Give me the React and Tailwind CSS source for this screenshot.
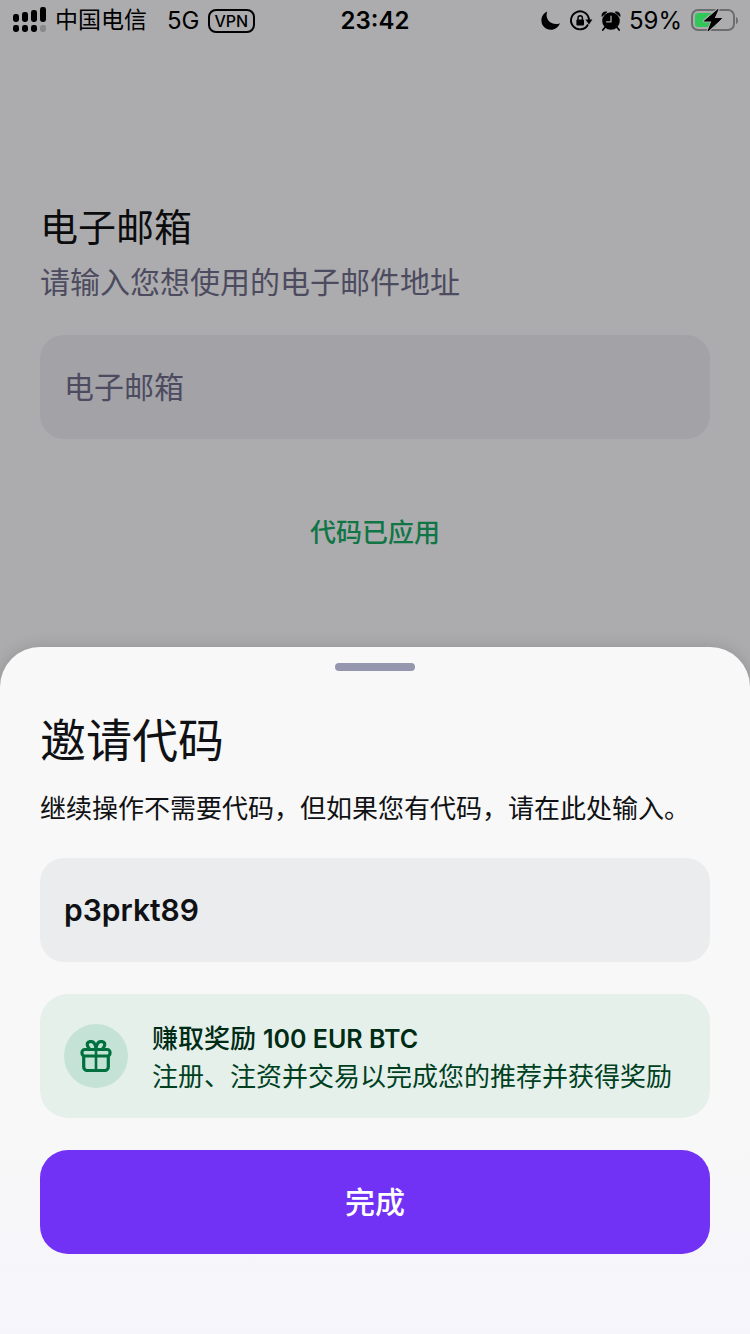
function SignalBars() {
  return (
    <svg className="h-7 w-9 shrink-0" viewBox="0 0 36 28" aria-hidden="true">
      <g fill="#000">
        <rect x="1" y="7" width="6" height="8" rx="2.4" />
        <rect x="10" y="5" width="6" height="10" rx="2.4" />
        <rect x="19" y="3" width="6" height="12" rx="2.4" />
        <rect x="28" y="0" width="6" height="15" rx="2.4" />
        <rect x="1" y="18" width="6" height="7" rx="2.4" />
        <rect x="10" y="18" width="6" height="7" rx="2.4" />
        <rect x="19" y="18" width="6" height="7" rx="2.4" />
      </g>
      <rect x="28" y="18" width="6" height="7" rx="2.4" fill="#88888a" />
    </svg>
  );
}

function MoonIcon() {
  return (
    <svg className="h-5 w-5" viewBox="0 0 20 20" aria-hidden="true">
      <path d="M6.2 .6C5.800 1.700 5.600 2.900 5.600 4.100c0 5.200 4.100 9 9.300 9 1.400 0 2.900-.3 4-.9C17.500 16.100 14 18.800 9.800 18.800 4.600 18.800.4 14.700.4 9.500.4 5.500 2.700 2.100 6.200.6Z" />
    </svg>
  );
}

function RotationLockIcon() {
  return (
    <svg className="h-6 w-6" viewBox="0 0 24 24" aria-hidden="true">
      <path d="M19 15.500A9 9 0 1 1 20 11" fill="none" stroke="#000" strokeWidth="1.900" />
      <path d="M16.400 10.400h7l-3.400 5Z" />
      <rect x="7.400" y="10.600" width="7.600" height="5.800" rx="1" />
      <path d="M9 11V9a2.200 2.200 0 0 1 4.400 0V11" fill="none" stroke="#000" strokeWidth="1.400" />
    </svg>
  );
}

function AlarmIcon() {
  return (
    <svg className="h-5 w-5" viewBox="0 0 20 20" aria-hidden="true">
      <circle cx="10" cy="10" r="8.800" />
      <path d="M.8 6C-.4 2.500 2.800-.6 6.400.9ZM19.200 6C20.400 2.500 17.200-.6 13.600.9Z" />
      <path d="M3.800 16.500 1.800 19M16.200 16.500l2 2.500" stroke="#000" strokeWidth="1.700" strokeLinecap="round" />
      <path d="M10 5.200v5.600H5.600" fill="none" stroke="#acacae" strokeWidth="1.300" strokeLinecap="round" strokeLinejoin="round" />
    </svg>
  );
}

function BatteryIcon() {
  return (
    <svg className="h-6 w-12" viewBox="0 0 48 24" aria-hidden="true">
      <rect x="2" y="1" width="42" height="20" rx="6" fill="none" stroke="#6d6d6f" strokeWidth="2" />
      <path d="M46 8c2.600.8 2.600 6.200 0 7Z" fill="#6d6d6f" />
      <path d="M8 4h18v14H8a3 3 0 0 1-3-3V7a3 3 0 0 1 3-3Z" fill="#31c659" />
      <path d="M28 .5 14.500 12H22l-4 10L31.500 9.500H24Z" fill="#000" stroke="#acacae" strokeWidth="3" strokeLinejoin="round" paintOrder="stroke" />
      <path d="M28 .5 14.500 12H22l-4 10L31.500 9.500H24Z" fill="#000" stroke="#000" strokeWidth="1" strokeLinejoin="round" />
    </svg>
  );
}

function GiftIcon() {
  return (
    <svg className="h-8 w-8" viewBox="0 0 32 32" fill="none" stroke="#00703f" strokeWidth="3.200" strokeLinejoin="round" aria-hidden="true">
      <rect x="2" y="9.500" width="28" height="6.500" rx="2.800" />
      <path d="M3.700 16V27a3.500 3.500 0 0 0 3.500 3.500h17.600a3.500 3.500 0 0 0 3.500-3.500V16" />
      <path d="M16 9.500V30.500" strokeWidth="2.600" />
      <path d="M16 9C15.500 4 13.500 1.500 10.800 1.500 8.800 1.500 7.200 2.700 7.200 4.600c0 1.900 1.300 3.200 2.600 4.600M16 9c.5-5 2.500-7.500 5.200-7.500 2 0 3.600 1.200 3.600 3.100 0 1.900-1.300 3.200-2.600 4.600" />
    </svg>
  );
}

function StatusBar() {
  return (
    <header className="grid h-10 grid-cols-[1fr_auto_1fr] items-center px-3 pt-px text-2xl text-black">
      <div className="flex items-center">
        <SignalBars />
        <span className="ml-[7px] text-[23px]">中国电信</span>
        <span className="ml-5">5G</span>
        <span className="ml-2 flex h-6 items-center rounded-lg border-2 border-black px-[5px] text-base font-medium">VPN</span>
      </div>
      <time className="font-semibold">23:42</time>
      <div className="flex items-center justify-end gap-2">
        <MoonIcon />
        <RotationLockIcon />
        <AlarmIcon />
        <span>59%</span>
        <BatteryIcon />
      </div>
    </header>
  );
}

export default function App() {
  return (
    <div className="flex min-h-screen flex-col bg-[#acacae] font-['Inter','Noto_Sans_CJK_SC',sans-serif]">
      <StatusBar />
      <main className="px-10 pt-[163px] pb-[94px]">
        <h1 className="text-[38px] leading-12 text-[#0c0c0e]">电子邮箱</h1>
        <label htmlFor="email" className="mt-[11px] block text-[30px] leading-10 text-[#4c4b5f]">
          请输入您想使用的电子邮件地址
        </label>
        <input
          id="email"
          type="email"
          placeholder="电子邮箱"
          className="mt-[33px] block h-26 w-full rounded-3xl bg-[#a3a2a7] px-6 text-[30px] text-[#0c0c0e] outline-none placeholder:text-[#4c4b5f]"
        />
        <div className="mt-[74px] flex justify-center">
          <button type="button" className="text-[26px] leading-10 font-medium text-[#117546]">代码已应用</button>
        </div>
      </main>
      <section
        role="dialog"
        aria-labelledby="invite-title"
        className="flex grow flex-col rounded-t-[40px] bg-linear-to-b from-[#f8f8f8] from-70% to-[#f5f5fb] px-10 pt-4 pb-20 shadow-[0_0_16px_rgba(0,0,0,0.15)]"
      >
        <div className="h-2 w-20 self-center rounded-full bg-[#9497ad]" />
        <h2 id="invite-title" className="mt-[41px] text-[46px] leading-14 text-[#101114]">邀请代码</h2>
        <label htmlFor="code" className="mt-[21px] text-[26px] leading-10 text-[#101114]">
          继续操作不需要代码，但如果您有代码，请在此处输入。
        </label>
        <input
          id="code"
          type="text"
          defaultValue="p3prkt89"
          className="mt-[29px] h-26 w-full rounded-3xl bg-[#ebecee] px-6 text-[30px] font-semibold text-[#101114] outline-none"
        />
        <div className="mt-8 flex h-31 items-center gap-6 rounded-[28px] bg-[#e5f0eb] px-6">
          <div className="flex size-16 shrink-0 items-center justify-center rounded-full bg-[#c4e2d6]">
            <GiftIcon />
          </div>
          <div className="pt-[3px] text-[26px] leading-[38px] text-[#00401f]">
            <p className="font-medium text-[#002b15]">
              赚取奖励 <span className="text-[25px] font-semibold">100 EUR BTC</span>
            </p>
            <p>注册、注资并交易以完成您的推荐并获得奖励</p>
          </div>
        </div>
        <button type="button" className="mt-8 h-26 w-full rounded-[28px] bg-[#7132f5] text-[30px] font-medium text-white">
          完成
        </button>
      </section>
    </div>
  );
}
